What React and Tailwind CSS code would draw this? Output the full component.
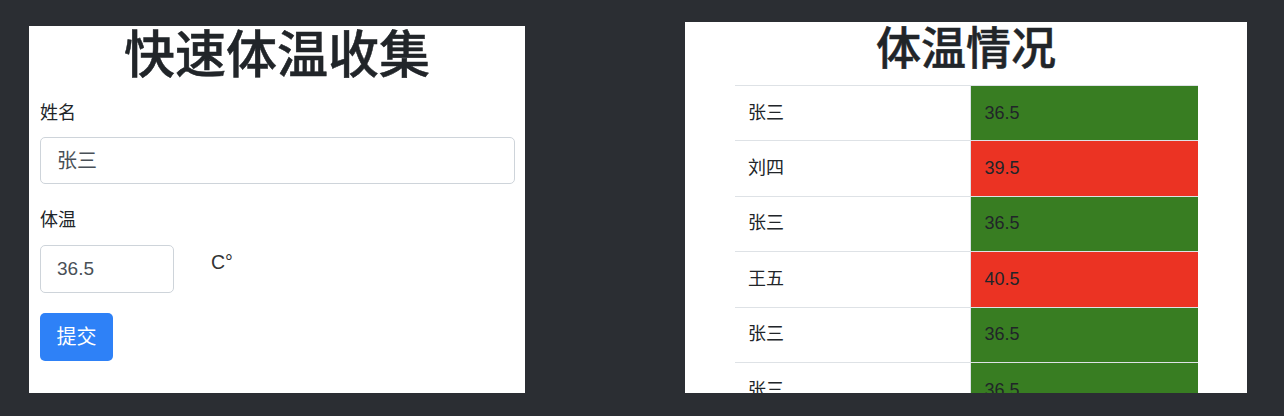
const rows = [
  { name: '张三', temp: 36.5 },
  { name: '刘四', temp: 39.5 },
  { name: '张三', temp: 36.5 },
  { name: '王五', temp: 40.5 },
  { name: '张三', temp: 36.5 },
  { name: '张三', temp: 36.5 },
];

const font = { fontFamily: '"Helvetica Neue", "Liberation Sans", "Noto Sans CJK SC", sans-serif' };

const App = () => {
  return (
    <div className="flex w-full h-[416px] bg-[#2b2e33] overflow-hidden" style={font}>
      {/* 收集表单 */}
      <div className="ml-[29px] mt-[26px] w-[496px] h-[367px] bg-white overflow-hidden">
        <h1 className="text-center text-[51px] leading-[60px] font-medium text-[#212529] [-webkit-text-stroke:0.5px_#212529]">快速体温收集</h1>
        <div className="pl-[11px] pr-[10px]">
          <label className="block mt-[15px] text-[18px] leading-[24px] text-[#212529]">姓名</label>
          <div className="mt-[12px] h-[47px] w-[475px] border border-[#ced4da] rounded-[5px] flex items-center pl-[16px] text-[20px] text-[#495057]">
            张三
          </div>
          <label className="block mt-[24px] text-[18px] leading-[24px] text-[#212529]">体温</label>
          <div className="mt-[13px] flex items-start">
            <div className="h-[48px] w-[134px] border border-[#ced4da] rounded-[5px] flex items-center pl-[16px] text-[19px] text-[#495057]">
              36.5
            </div>
            <span className="ml-[37px] mt-[5px] text-[19.5px] leading-[24px] text-[#333]">C°</span>
          </div>
          <button className="mt-[20px] h-[48px] w-[73px] rounded-[5px] bg-[#2e81f7] text-white text-[20px]">提交</button>
        </div>
      </div>

      {/* 体温列表 */}
      <div className="ml-[160px] mt-[22px] w-[562px] h-[371px] bg-white overflow-hidden">
        <h1 className="text-center text-[45px] leading-[56px] font-medium text-[#212529] [-webkit-text-stroke:0.5px_#212529]">体温情况</h1>
        <table className="mt-[7px] ml-[50px] w-[463px] border-collapse text-[18px] text-[#212529]">
          <tbody>
            {rows.map((r, i) => (
              <tr key={i} className="h-[55.4px] border-t border-[#dee2e6]">
                <td className="w-[235px] pl-[13px] align-middle">{r.name}</td>
                <td className={`pl-[14px] align-middle border-l border-[#dee2e6] ${r.temp >= 37.3 ? 'bg-[#eb3323]' : 'bg-[#387d22]'}`}>
                  {r.temp.toFixed(1)}
                </td>
              </tr>
            ))}
          </tbody>
        </table>
      </div>
    </div>
  );
};

export default App;
